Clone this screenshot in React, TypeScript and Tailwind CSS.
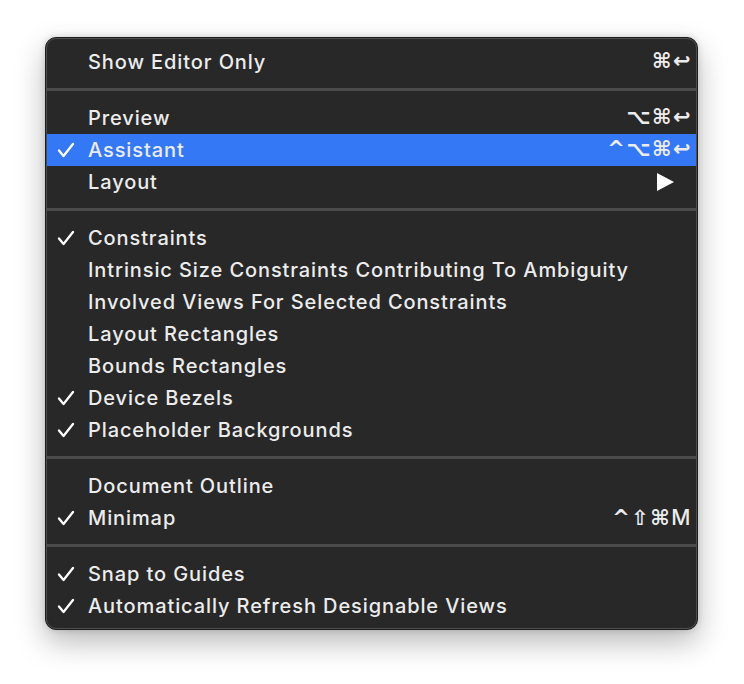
import React from 'react'

type Item = {
  label: string
  checked?: boolean
  shortcut?: string
  active?: boolean
  submenu?: boolean
}

const groups: Item[][] = [
  [{ label: 'Show Editor Only', shortcut: '⌘↩' }],
  [
    { label: 'Preview', shortcut: '⌥⌘↩' },
    { label: 'Assistant', shortcut: '^⌥⌘↩', checked: true, active: true },
    { label: 'Layout', submenu: true },
  ],
  [
    { label: 'Constraints', checked: true },
    { label: 'Intrinsic Size Constraints Contributing To Ambiguity' },
    { label: 'Involved Views For Selected Constraints' },
    { label: 'Layout Rectangles' },
    { label: 'Bounds Rectangles' },
    { label: 'Device Bezels', checked: true },
    { label: 'Placeholder Backgrounds', checked: true },
  ],
  [
    { label: 'Document Outline' },
    { label: 'Minimap', shortcut: '^⇧⌘M', checked: true },
  ],
  [
    { label: 'Snap to Guides', checked: true },
    { label: 'Automatically Refresh Designable Views', checked: true },
  ],
]

function Check() {
  return (
    <svg width="18" height="18" viewBox="0 0 18 18" className="shrink-0">
      <polyline points="2,9.5 6.5,15 16,3" fill="none" stroke="white" strokeWidth="2.3" strokeLinecap="round" strokeLinejoin="round" />
    </svg>
  )
}

function Triangle() {
  return (
    <svg width="18" height="18" viewBox="0 0 18 18">
      <polygon points="1,0 18,9 1,18" fill="white" />
    </svg>
  )
}

function Row({ item }: { item: Item }) {
  return (
    <div className={`flex items-center h-8 pl-[10px] pr-[7px] ${item.active ? 'bg-[#3478f6]' : ''}`}>
      <div className="w-[31px] flex items-center">{item.checked && <Check />}</div>
      <span className="flex-1 whitespace-nowrap font-medium tracking-[0.9px]">{item.label}</span>
      {item.shortcut && (
        <span
          className="whitespace-nowrap tracking-[1.5px] font-bold text-[21px] -mr-[3px]"
          style={{ fontFamily: '"DejaVu Sans", Inter, sans-serif' }}
        >
          {item.shortcut.replace('M', '')}
          {item.shortcut.includes('M') && (
            <span className="font-medium" style={{ fontFamily: 'Inter, sans-serif' }}>M</span>
          )}
        </span>
      )}
      {item.submenu && (
        <span className="mr-[15px] flex items-center">
          <Triangle />
        </span>
      )}
    </div>
  )
}

export default function App() {
  return (
    <div className="w-[744px] h-[684px] bg-white relative" style={{ fontFamily: 'Inter, "Noto Sans", sans-serif' }}>
      <div className="absolute left-[45px] top-[37px] w-[653px] rounded-[11px] bg-[#282828] border border-[#1c1c1c] shadow-[0_12px_30px_rgba(0,0,0,0.28),0_0_6px_rgba(0,0,0,0.15)]">
        <div className="rounded-[10px] border border-[#4e4e4e] pt-[7px] pb-[6px] text-[20px] text-[#ececec]">
          {groups.map((g, i) => (
            <div key={i}>
              {i > 0 && (
                <div className="pt-[10px] pb-[11px]">
                  <div className="h-[3px] bg-[#4b4b4b]" />
                </div>
              )}
              {g.map((item) => (
                <Row key={item.label} item={item} />
              ))}
            </div>
          ))}
        </div>
      </div>
    </div>
  )
}
